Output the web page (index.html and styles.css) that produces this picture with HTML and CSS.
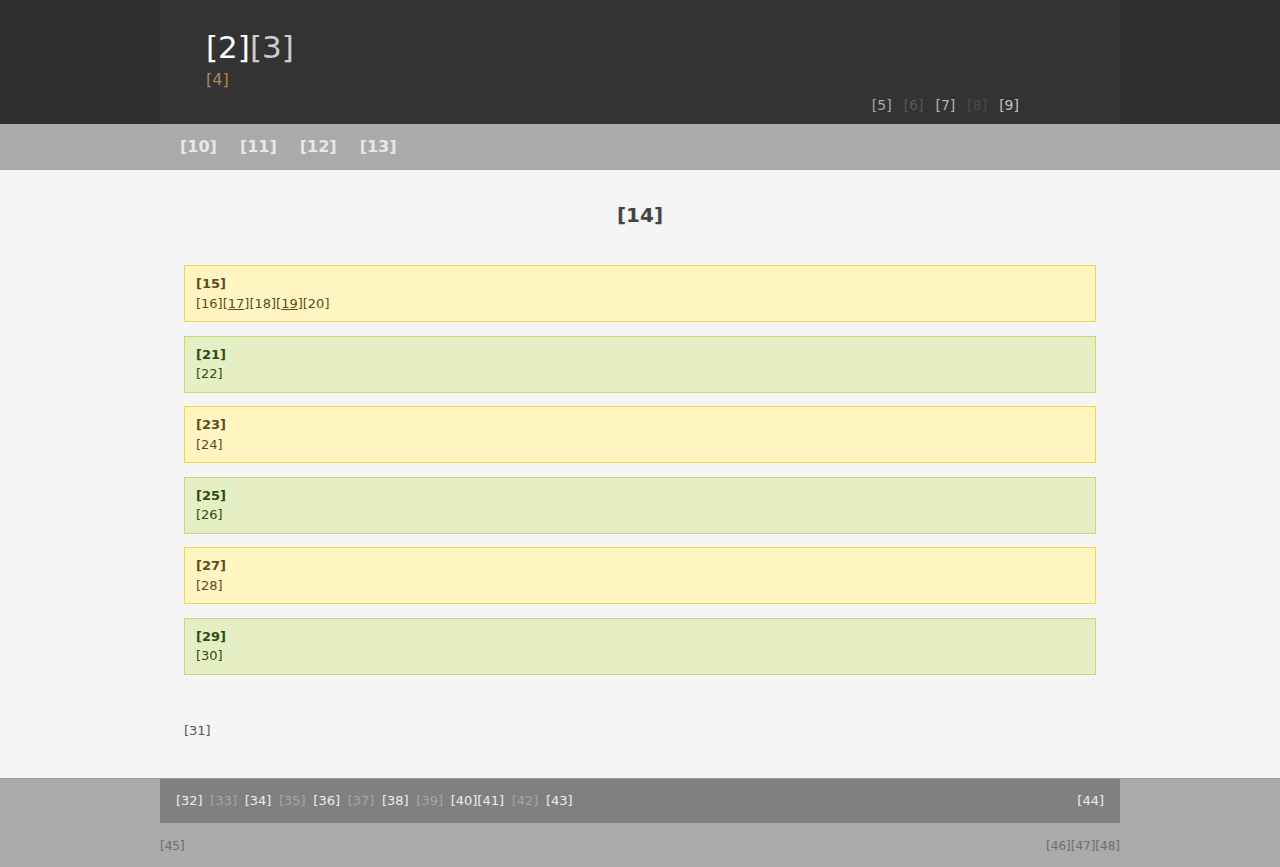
FILE: index.html
```html
<!DOCTYPE html>
<html lang="en">
<head>
<meta charset="utf-8">
<title>Page</title>
<link rel="stylesheet" href="styles.css">
</head>
<body>
<header class="site-header">
  <div class="header-inner">
    <div class="brand">
      <div class="brand-title"><span class="brand-main">[2]</span><span class="brand-sub">[3]</span></div>
      <div class="brand-tag">[4]</div>
    </div>
    <nav class="util-nav">
      <a class="u1">[5]</a>
      <a class="u2">[6]</a>
      <a class="u3">[7]</a>
      <a class="u4">[8]</a>
      <a class="u5">[9]</a>
    </nav>
  </div>
</header>
<nav class="main-nav">
  <div class="main-nav-inner">
    <a>[10]</a>
    <a>[11]</a>
    <a>[12]</a>
    <a>[13]</a>
  </div>
</nav>
<main class="content">
  <div class="content-inner">
    <h1 class="page-title">[14]</h1>
    <div class="note note-yellow">
      <div class="note-title">[15]</div>
      <div class="note-text">[16][<a>17</a>][18][<a>19</a>][20]</div>
    </div>
    <div class="note note-green">
      <div class="note-title">[21]</div>
      <div class="note-text">[22]</div>
    </div>
    <div class="note note-yellow">
      <div class="note-title">[23]</div>
      <div class="note-text">[24]</div>
    </div>
    <div class="note note-green">
      <div class="note-title">[25]</div>
      <div class="note-text">[26]</div>
    </div>
    <div class="note note-yellow">
      <div class="note-title">[27]</div>
      <div class="note-text">[28]</div>
    </div>
    <div class="note note-green">
      <div class="note-title">[29]</div>
      <div class="note-text">[30]</div>
    </div>
    <p class="after">[31]</p>
  </div>
</main>
<footer class="site-footer">
  <div class="footer-bar">
    <div class="footer-links">
      <a class="on">[32]</a>
      <a class="off">[33]</a>
      <a class="on">[34]</a>
      <a class="off">[35]</a>
      <a class="on">[36]</a>
      <a class="off">[37]</a>
      <a class="on">[38]</a>
      <a class="off">[39]</a>
      <a class="on tight">[40]</a>
      <a class="on">[41]</a>
      <a class="off">[42]</a>
      <a class="on">[43]</a>
    </div>
    <a class="on footer-right">[44]</a>
  </div>
  <div class="footer-bottom">
    <span>[45]</span>
    <span>[46][47][48]</span>
  </div>
</footer>
</body>
</html>
```
FILE: styles.css
```css
* { box-sizing: border-box; }
html, body { margin: 0; padding: 0; }
body {
  font-family: "DejaVu Sans", "Liberation Sans", sans-serif;
  background: #aaaaaa;
  color: #444;
}
a { text-decoration: none; color: inherit; }

.site-header { background: #2f2f2f; }
.header-inner {
  width: 960px;
  margin: 0 auto;
  height: 124px;
  background: #333333;
  padding: 27px 101px 9px 46px;
  display: flex;
  justify-content: space-between;
  align-items: flex-end;
}
.brand { align-self: flex-start; }
.brand-title { font-size: 31px; line-height: 40px; }
.brand-main { color: #ffffff; }
.brand-sub { color: #cccccc; }
.brand-tag { font-size: 16px; line-height: 24px; color: #b5835a; margin-top: 1px; }
.util-nav { display: flex; gap: 12px; font-size: 14px; line-height: 20px; }
.u1 { color: #a8a8a8; }
.u2 { color: #585858; }
.u3 { color: #b6b6b6; }
.u4 { color: #4c4c4c; }
.u5 { color: #c0c0c0; }

.main-nav { background: #aaaaaa; }
.main-nav-inner {
  width: 960px;
  margin: 0 auto;
  height: 46px;
  padding-left: 20px;
  padding-bottom: 1px;
  display: flex;
  align-items: center;
  gap: 23px;
  font-size: 16px;
  font-weight: bold;
  color: #ebe8e2;
}

.content { background: #f5f5f5; }
.content-inner {
  width: 960px;
  margin: 0 auto;
  padding: 30px 24px 37px;
}
.page-title {
  margin: 0 0 35px;
  text-align: center;
  font-size: 20px;
  line-height: 30px;
  color: #444444;
}
.note {
  border: 1px solid;
  padding: 8px 11px;
  margin-bottom: 13.5px;
  font-size: 13px;
  line-height: 19.5px;
}
.note-title { font-weight: bold; }
.note-text a { text-decoration: underline; }
.note-yellow { background: #fff5c0; border-color: #f7d54a; color: #5b4b22; }
.note-green { background: #e5efc3; border-color: #c4da78; color: #2f4a12; }
.after {
  margin: 46px 0 0;
  font-size: 13px;
  line-height: 20px;
  color: #555555;
}

.site-footer { background: #aaaaaa; border-top: 1px solid #9a9a9a; }
.footer-bar {
  width: 960px;
  margin: 0 auto;
  height: 44px;
  background: #808080;
  padding: 0 16px;
  display: flex;
  justify-content: space-between;
  align-items: center;
  font-size: 13px;
  line-height: 20px;
}
.footer-links { display: flex; gap: 7.65px; }
.footer-links .tight { margin-right: -7.65px; }
.on { color: #eeeeee; }
.off { color: #a6a6a6; }
.footer-bottom {
  width: 960px;
  margin: 0 auto;
  height: 44px;
  padding-top: 2px;
  display: flex;
  justify-content: space-between;
  align-items: center;
  font-size: 12px;
  line-height: 16px;
  color: #6e6e6e;
}
```
